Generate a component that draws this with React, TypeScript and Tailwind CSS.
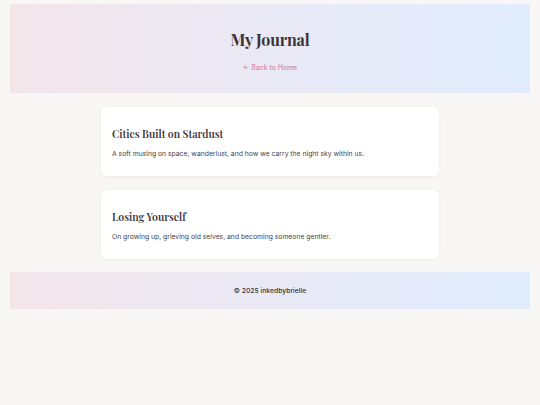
import React from 'react';

const posts = [
  {
    title: 'Cities Built on Stardust',
    excerpt: 'A soft musing on space, wanderlust, and how we carry the night sky within us.',
  },
  {
    title: 'Losing Yourself',
    excerpt: 'On growing up, grieving old selves, and becoming someone gentler.',
  },
];

const serif = "font-['Playfair_Display','DejaVu_Serif',serif]";

export default function App() {
  return (
    <div className="min-h-[405px] bg-[#f9f7f5] px-[10px] pt-[4px] font-['Inter',sans-serif]">
      <header className="flex h-[89px] flex-col items-center bg-gradient-to-r from-[#f3e5ea] via-[#e9e9f5] to-[#e0ecfd] pt-[26px]">
        <h1 className={`${serif} text-[16px] font-bold leading-[20px] tracking-[-0.2px] text-[#3c3236]`}>
          My Journal
        </h1>
        <a href="#" className="mt-[13px] text-[6.9px] font-medium leading-[10px] text-[#d58ba5]">
          ← Back to Home
        </a>
      </header>

      <main className="mx-auto flex w-[338px] flex-col gap-[14px] pt-[14px] pb-[13px]">
        {posts.map((p) => (
          <article
            key={p.title}
            className="flex h-[69px] flex-col rounded-[6px] bg-white px-[11px] pt-[20px] shadow-[0_1px_4px_rgba(0,0,0,0.05)]"
          >
            <h2 className={`${serif} text-[10.5px] font-semibold leading-[14px] text-[#3c3236]`}>{p.title}</h2>
            <p className="mt-[8px] text-[6.8px] leading-[10px] text-[#4a4246]">{p.excerpt}</p>
          </article>
        ))}
      </main>

      <footer className="flex h-[37px] items-center justify-center bg-gradient-to-r from-[#f3e5ea] via-[#e9e9f5] to-[#e0ecfd] pt-[2px]">
        <span className="text-[6.8px] font-medium text-[#3a3236]">© 2025 inkedbybrielle</span>
      </footer>
    </div>
  );
}
